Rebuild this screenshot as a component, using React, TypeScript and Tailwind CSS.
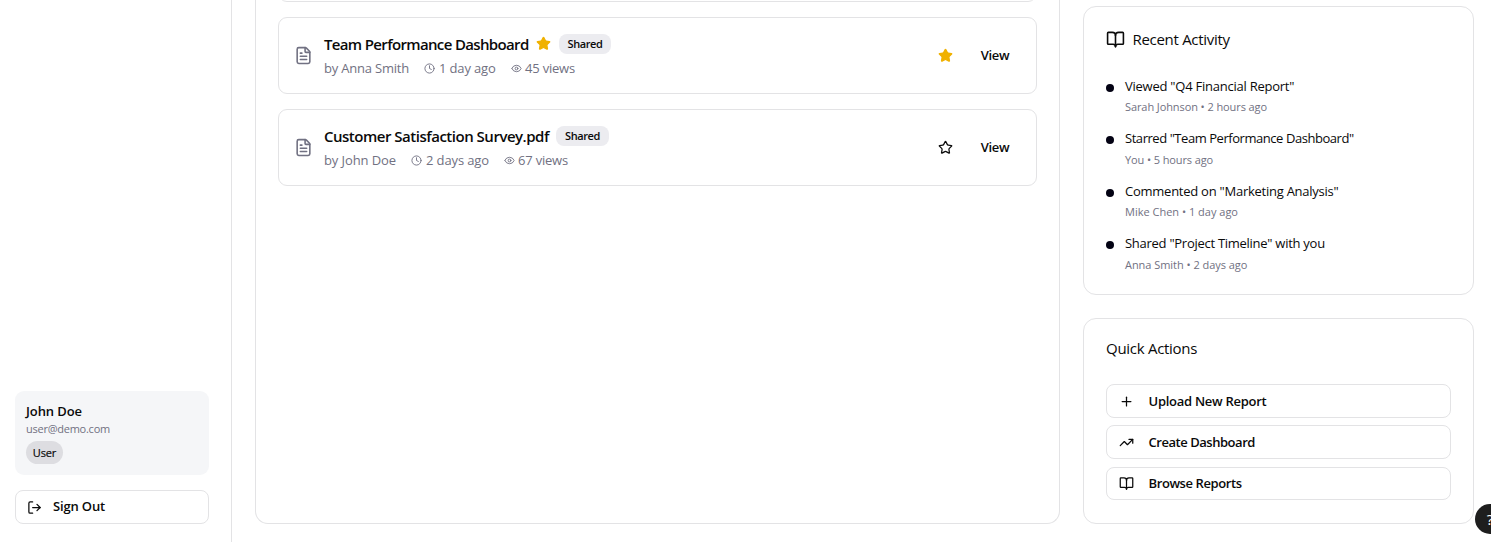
import React from "react";
import { BookOpen, Clock, Eye, FileText, LogOut, Plus, Star, TrendingUp } from "lucide-react";

type Report = {
  title: string;
  titleClass: string;
  author: string;
  authorClass: string;
  time: string;
  timeClass: string;
  views: string;
  starred: boolean;
};

const reports: Report[] = [
  {
    title: "Team Performance Dashboard",
    titleClass: "w-[205px] tracking-[-0.65px]",
    author: "by Anna Smith",
    authorClass: "w-[85px]",
    time: "1 day ago",
    timeClass: "w-[57px] tracking-[-0.14px]",
    views: "45 views",
    starred: true,
  },
  {
    title: "Customer Satisfaction Survey.pdf",
    titleClass: "w-[225px] tracking-[-0.49px]",
    author: "by John Doe",
    authorClass: "w-[72px] tracking-[-0.1px]",
    time: "2 days ago",
    timeClass: "w-[63px] tracking-[-0.12px]",
    views: "67 views",
    starred: false,
  },
];

const activities = [
  {
    title: 'Viewed "Q4 Financial Report"',
    titleClass: "tracking-[-0.24px]",
    meta: "Sarah Johnson • 2 hours ago",
    metaClass: "mt-[3px] tracking-[-0.09px]",
  },
  {
    title: 'Starred "Team Performance Dashboard"',
    titleClass: "tracking-[-0.45px]",
    meta: "You • 5 hours ago",
    metaClass: "mt-[3.5px] tracking-[-0.11px]",
  },
  {
    title: 'Commented on "Marketing Analysis"',
    titleClass: "tracking-[-0.25px]",
    meta: "Mike Chen • 1 day ago",
    metaClass: "mt-[3.5px]",
  },
  {
    title: 'Shared "Project Timeline" with you',
    titleClass: "tracking-[-0.27px]",
    meta: "Anna Smith • 2 days ago",
    metaClass: "mt-[3.5px] tracking-[-0.04px]",
  },
];

const actions = [
  { label: "Upload New Report", labelClass: "h-[34px] tracking-[-0.27px]", Icon: Plus },
  { label: "Create Dashboard", labelClass: "h-[34px] tracking-[-0.46px]", Icon: TrendingUp },
  { label: "Browse Reports", labelClass: "mt-px h-[33px] tracking-[-0.4px]", Icon: BookOpen },
];

function ReportCard({ report }: { report: Report }) {
  return (
    <div className="flex h-[77px] shrink-0 items-center rounded-[9px] border border-[#e3e3e5] pl-[15px] pr-[26px]">
      <FileText className="size-[19px] shrink-0 text-[#717182]" strokeWidth={2} />
      <div className="ml-[11px] flex flex-1 flex-col">
        <div className="flex h-[22px] items-center">
          <h4 className={`shrink-0 text-[15px] leading-[22px] font-semibold ${report.titleClass}`}>{report.title}</h4>
          {report.starred && <Star className="ml-[7px] size-[15px] shrink-0 fill-[#f0b100] text-[#f0b100]" />}
          <span
            className={`flex h-5 items-center justify-center rounded-[8px] bg-[#ececf0] pt-px text-[11px] font-semibold tracking-[-0.4px] ${report.starred ? "ml-[8px] w-[52px]" : "ml-[7px] w-[53px]"}`}
          >
            Shared
          </span>
        </div>
        <div className="mt-[4px] flex h-[20px] items-center text-[13px] tracking-[-0.2px] text-[#717182]">
          <span className={`shrink-0 ${report.authorClass}`}>{report.author}</span>
          <Clock className="ml-[15px] mr-[4px] size-[11px] shrink-0" />
          <span className={`shrink-0 ${report.timeClass}`}>{report.time}</span>
          <Eye className="ml-[15px] mr-[3px] size-[11px] shrink-0" />
          <span>{report.views}</span>
        </div>
      </div>
      <Star className={`size-[15px] shrink-0 ${report.starred ? "fill-[#f0b100] text-[#f0b100]" : ""}`} />
      <button className="ml-[27px] w-[30px] text-[13px] font-semibold tracking-[-0.3px]">View</button>
    </div>
  );
}

export default function App() {
  return (
    <div className="relative flex h-[542px] w-[1491px] overflow-hidden bg-white font-['Open_Sans','Noto_Sans',sans-serif] text-[#0a0a0a] whitespace-nowrap">
      <aside className="flex w-[232px] shrink-0 flex-col justify-end border-r border-[#e3e3e5] pr-[22px] pb-[18px] pl-[15px]">
        <div className="flex h-[84px] flex-col items-start rounded-[9px] bg-[#f5f6f8] px-[11px] pt-[11px]">
          <p className="h-[19px] text-[13px] leading-[19px] font-semibold tracking-[-0.1px]">John Doe</p>
          <p className="h-[16px] text-[11px] leading-[16px] tracking-[-0.25px] text-[#717182]">user@demo.com</p>
          <span className="mt-[4px] flex h-[23px] w-[37px] items-center justify-center rounded-full bg-[#dddde1] pt-px text-[11px] tracking-[-0.1px] [-webkit-text-stroke:0.2px]">
            User
          </span>
        </div>
        <button className="mt-[15px] flex h-[34px] items-center rounded-[8px] border border-[#e3e3e5] pl-[11px] text-[13px] font-semibold tracking-[-0.15px]">
          <LogOut className="mr-[11px] size-[15px]" />
          Sign Out
        </button>
      </aside>

      <main className="flex flex-1 gap-[23px] pl-[23px]">
        <section className="flex h-[524px] w-[805px] shrink-0 flex-col gap-[15px] rounded-b-[13px] border border-t-0 border-[#e3e3e5] px-[22px]">
          <div className="-mt-[75px] h-[77px] shrink-0 rounded-[9px] border border-[#e3e3e5]" />
          {reports.map((report) => (
            <ReportCard key={report.title} report={report} />
          ))}
        </section>

        <div className="flex w-[391px] shrink-0 flex-col gap-[23px] pt-[6px]">
          <section className="h-[289px] rounded-[13px] border border-[#e3e3e5] px-[22px] pt-[21px]">
            <h3 className="flex h-[22px] items-center text-[15px] font-normal tracking-[-0.3px]">
              <BookOpen className="mr-[7.5px] size-[19px]" />
              Recent Activity
            </h3>
            <ul className="mt-[27px]">
              {activities.map((a) => (
                <li key={a.title} className="flex h-[52.4px]">
                  <span className="mt-[7px] mr-[11px] size-[8px] shrink-0 rounded-full bg-[#030213]" />
                  <div>
                    <p className={`text-[13px] leading-[19px] ${a.titleClass}`}>{a.title}</p>
                    <p className={`text-[11px] leading-[15px] text-[#717182] ${a.metaClass}`}>{a.meta}</p>
                  </div>
                </li>
              ))}
            </ul>
          </section>

          <section className="h-[206px] rounded-[13px] border border-[#e3e3e5] px-[22px] pt-[18px]">
            <h3 className="h-[22px] text-[15px] leading-[22px] font-normal tracking-[-0.28px]">Quick Actions</h3>
            <div className="mt-[25px] flex flex-col gap-[7px]">
              {actions.map(({ label, labelClass, Icon }) => (
                <button
                  key={label}
                  className={`flex items-center rounded-[8px] border border-[#e3e3e5] pl-[12px] text-[13px] font-semibold ${labelClass}`}
                >
                  <Icon className="mr-[14.5px] size-[15px]" />
                  <span className="pt-px">{label}</span>
                </button>
              ))}
            </div>
          </section>
        </div>
      </main>

      <button className="absolute top-[504px] left-[1475px] flex size-[30px] items-center justify-center rounded-full bg-[#1e1e1e] text-[15px] text-white">
        ?
      </button>
    </div>
  );
}
